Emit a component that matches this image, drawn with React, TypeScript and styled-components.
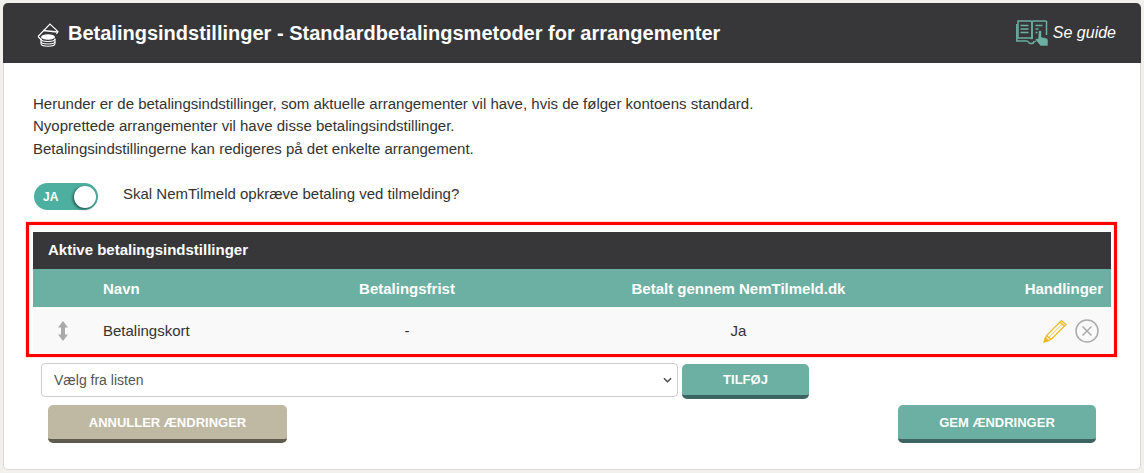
import styled, { createGlobalStyle } from "styled-components";

const GlobalStyle = createGlobalStyle`
  html, body {
    margin: 0;
    padding: 0;
    background: #f1f0ec;
    font-family: "Liberation Sans", Arial, sans-serif;
    color: #333;
  }
`;
const Page = styled.div`
  padding: 3px;
  width: 1144px;
  height: 473px;
  box-sizing: border-box;
`;
const Card = styled.div`
  width: 1138px;
  height: 467px;
  box-sizing: border-box;
  background: #fff;
  border-radius: 5px;
  box-shadow: inset 0 0 0 1px #dcdad4;
  overflow: hidden;
`;
const Header = styled.header`
  height: 60px;
  background: #37373a;
  color: #fff;
  display: flex;
  align-items: center;
  justify-content: space-between;
  padding: 0 25px 0 33px;
`;
const HeaderTitle = styled.h1`
  display: flex;
  align-items: center;
  gap: 8px;
  margin: 0;
  font-size: 20px;
  font-weight: 700;
`;
const Guide = styled.div`
  display: flex;
  align-items: center;
  gap: 5px;
  font-size: 16px;
  font-style: italic;
`;
const Body = styled.div`
  padding: 30px 23px 0 30px;
`;
const Intro = styled.p`
  margin: 0;
  font-size: 15.02px;
  line-height: 22.4px;
`;
const ToggleRow = styled.div`
  display: flex;
  align-items: flex-start;
  margin-top: 23px;
  font-size: 15px;
`;
const Toggle = styled.div`
  width: 64px;
  height: 27px;
  margin-left: 1px;
  box-sizing: border-box;
  border-radius: 14px;
  background: #4caf9f;
  color: #fff;
  font-size: 12px;
  font-weight: 700;
  display: flex;
  align-items: center;
  justify-content: space-between;
  padding: 0 2px 0 9px;
`;
const Knob = styled.span`
  width: 22px;
  height: 22px;
  border-radius: 50%;
  background: #fff;
  box-shadow: -1px 1px 3px rgba(0, 0, 0, 0.6);
`;
const ToggleLabel = styled.span`
  margin-left: 25px;
  line-height: 22px;
`;
const Highlight = styled.div`
  margin: 12px 0 0 -7px;
  width: 1091px;
  height: 135px;
  box-sizing: border-box;
  border: 3px solid #f00;
  box-shadow: 0 0 1px rgba(255, 0, 0, 0.7), inset 0 0 1px rgba(255, 0, 0, 0.7);
  padding: 7px 3px 0 4px;
`;
const TableTitle = styled.div`
  height: 37px;
  background: #37373a;
  color: #fff;
  font-size: 15px;
  font-weight: 700;
  line-height: 36px;
  padding-left: 15px;
`;
const Columns = "70px 180px 248px 415px 1fr";
const HeadRow = styled.div`
  display: grid;
  grid-template-columns: ${Columns};
  height: 38px;
  align-items: center;
  background: #6cafa3;
  color: #fff;
  font-size: 15px;
  font-weight: 700;
`;
const DataRow = styled.div`
  display: grid;
  grid-template-columns: ${Columns};
  height: 47px;
  align-items: center;
  background: #f9f9f9;
  font-size: 15px;
`;
const Cell = styled.div<{ $align?: string }>`
  text-align: ${(p) => p.$align || "left"};
`;
const EndCell = styled.div`
  display: flex;
  justify-content: flex-end;
  align-items: center;
  gap: 8px;
  padding-right: 12px;
`;
const HeadEnd = styled.div`
  text-align: right;
  padding-right: 8px;
`;
const HandleCell = styled.div`
  display: flex;
  justify-content: center;
  padding-right: 10px;
`;
const AddRow = styled.div`
  display: flex;
  align-items: flex-start;
  gap: 4px;
  margin: 6px 0 0 8px;
`;
const chevron =
  "data:image/svg+xml,%3Csvg xmlns='http://www.w3.org/2000/svg' viewBox='0 0 10 6'%3E%3Cpath d='M1 1l4 4 4-4' fill='none' stroke='%23444' stroke-width='1.500'/%3E%3C/svg%3E";
const Select = styled.select`
  width: 637px;
  height: 34px;
  box-sizing: border-box;
  appearance: none;
  border: 1px solid #ccc;
  border-radius: 4px;
  background: #fff url("${chevron}") no-repeat right 5px center / 9px 6px;
  color: #555;
  font-family: inherit;
  font-size: 14px;
  padding: 0 12px;
`;
const Button = styled.button<{ $tone?: "green" | "sand"; $width: number }>`
  width: ${(p) => p.$width}px;
  height: 34px;
  box-sizing: content-box;
  padding: 0;
  border: none;
  border-bottom: 4px solid ${(p) => (p.$tone === "sand" ? "#5e5a4c" : "#3c6461")};
  border-radius: 5px;
  background: ${(p) => (p.$tone === "sand" ? "#bfb9a3" : "#6cafa3")};
  color: #fff;
  font-family: inherit;
  font-size: 13px;
  font-weight: 700;
`;
const AddButton = styled(Button)`
  margin-top: 1px;
  height: 31px;
`;
const Actions = styled.div`
  display: flex;
  justify-content: space-between;
  margin: 6px 0 0 15px;
  width: 1048px;
`;

function HatIcon() {
  return (
    <svg width="24" height="28" viewBox="0 0 24 28" fill="none" stroke="#fff" strokeWidth="1.100">
      <path d="M2 17.500 L14 5 L22 12.500 L20.500 15 M2 17.500 L5.500 21" />
      <path d="M7 11.500 L21.500 13" strokeWidth="1.400" />
      <ellipse cx="12" cy="18" rx="7" ry="2.800" fill="#fff" stroke="none" />
      <path d="M5 19.500v5c0 1.600 3 2.700 7 2.700s7-1.100 7-2.700v-5" />
      <path d="M5 22.500c0 1.600 3 2.500 7 2.500s7-.9 7-2.500" />
      <path d="M5 20c0 1.600 3 2.500 7 2.500s7-.9 7-2.500" />
    </svg>
  );
}

function BookIcon() {
  return (
    <svg width="32" height="26" viewBox="0 0 32 26" fill="none" stroke="#6cafa3" strokeWidth="1.500">
      <path d="M2 1h12.500c.8 0 1.500.6 1.500 1.500V19c-.4-.8-1-1-1.800-1H2z" />
      <path d="M30.500 1H17.500c-.8 0-1.500.6-1.500 1.500V19" />
      <path d="M30.500 1v14M.8 4v17h10.700M19 21h1" />
      <path d="M4.500 5.500h8M4.500 9h8M4.500 12.500h8M19.500 5.500h7M19.500 9h3M19.500 12.500h2" />
      <path d="M11.500 21c1 2 2.800 2.600 3.800 2.600s2.500-.6 3-2.600" />
      <path
        d="M22.500 11.500c0-1.500 3-1.500 3 0V17l4.500 1c1.200.3 2 1.200 2 2.300V26h-7.500l-5-6c-.7-1 .8-2.300 2.500-1.200z"
        fill="#6cafa3"
        stroke="#37373a"
        strokeWidth=".6"
      />
    </svg>
  );
}

function MoveIcon() {
  return (
    <svg width="12" height="20" viewBox="0 0 12 20" fill="#aaa">
      <path d="M6 0l5 6.500H8v7h3L6 20 1 13.500h3v-7H1z" />
    </svg>
  );
}

function PencilIcon() {
  return (
    <svg width="24" height="24" viewBox="0 0 24 24" fill="none" stroke="#f0b61e" strokeWidth="1.200">
      <path d="M1.500 22.500 L3.500 16.500 L18.500 1.500 L23 5.500 L8 20.500 Z" />
      <path d="M5.700 18.500 L20.800 3.500" strokeWidth=".7" />
      <path d="M3.500 16.500 L8 20.500 M17 3.200 L21.200 7" />
      <path d="M1 23l4.500-1.300L2.300 18.800z" fill="#f0b61e" />
    </svg>
  );
}

function RemoveIcon() {
  return (
    <svg width="24" height="24" viewBox="0 0 24 24" fill="none" stroke="#aaa" strokeWidth="1.500">
      <circle cx="12" cy="12" r="11" />
      <path d="M7.500 7.500l9 9M16.500 7.500l-9 9" />
    </svg>
  );
}

export default function App() {
  return (
    <Page>
      <GlobalStyle />
      <Card>
        <Header>
          <HeaderTitle>
            <HatIcon />
            Betalingsindstillinger - Standardbetalingsmetoder for arrangementer
          </HeaderTitle>
          <Guide>
            <BookIcon />
            Se guide
          </Guide>
        </Header>
        <Body>
          <Intro>
            Herunder er de betalingsindstillinger, som aktuelle arrangementer vil have, hvis de følger kontoens standard.
            <br />
            Nyoprettede arrangementer vil have disse betalingsindstillinger.
            <br />
            Betalingsindstillingerne kan redigeres på det enkelte arrangement.
          </Intro>
          <ToggleRow>
            <Toggle>
              JA
              <Knob />
            </Toggle>
            <ToggleLabel>Skal NemTilmeld opkræve betaling ved tilmelding?</ToggleLabel>
          </ToggleRow>
          <Highlight>
            <TableTitle>Aktive betalingsindstillinger</TableTitle>
            <HeadRow>
              <div />
              <Cell>Navn</Cell>
              <Cell $align="center">Betalingsfrist</Cell>
              <Cell $align="center">Betalt gennem NemTilmeld.dk</Cell>
              <HeadEnd>Handlinger</HeadEnd>
            </HeadRow>
            <DataRow>
              <HandleCell>
                <MoveIcon />
              </HandleCell>
              <Cell>Betalingskort</Cell>
              <Cell $align="center">-</Cell>
              <Cell $align="center">Ja</Cell>
              <EndCell>
                <PencilIcon />
                <RemoveIcon />
              </EndCell>
            </DataRow>
          </Highlight>
          <AddRow>
            <Select defaultValue="">
              <option value="">Vælg fra listen</option>
            </Select>
            <AddButton $width={127}>TILFØJ</AddButton>
          </AddRow>
          <Actions>
            <Button $tone="sand" $width={239}>
              ANNULLER ÆNDRINGER
            </Button>
            <Button $width={198}>GEM ÆNDRINGER</Button>
          </Actions>
        </Body>
      </Card>
    </Page>
  );
}
